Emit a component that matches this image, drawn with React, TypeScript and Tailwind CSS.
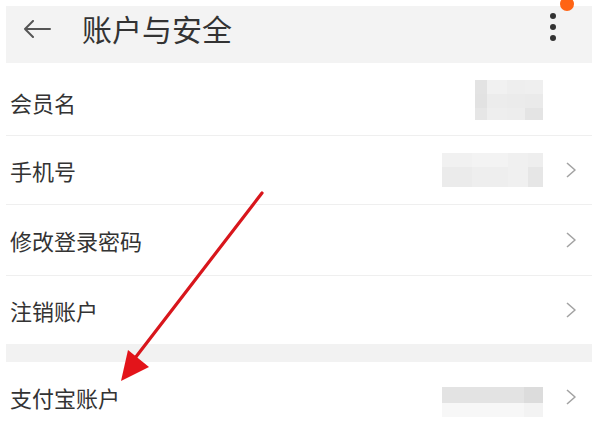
import React from 'react';

const cjk = { fontFamily: '"Noto Sans CJK SC", "Noto Sans", sans-serif' };

// Blurred placeholder (mosaic) on the right of a row
function Mosaic({ cells, cols, className }: { cells: string[]; cols: string; className: string }) {
  return (
    <div className={`grid ${cols} ${className}`}>
      {cells.map((c, i) => (
        <div key={i} style={{ backgroundColor: c }} />
      ))}
    </div>
  );
}

function Chevron() {
  return (
    <svg width="12" height="18" viewBox="0 0 12 18" className="shrink-0">
      <polyline points="2,2 10,9 2,16" fill="none" stroke="#a3a3a3" strokeWidth="1.6" strokeLinejoin="round" />
    </svg>
  );
}

interface RowProps {
  label: string;
  className: string;
  right?: React.ReactNode;
  arrow?: boolean;
}

function Row({ label, className, right, arrow = true }: RowProps) {
  return (
    <div className={`flex items-center pl-[4px] pr-[15px] ${className}`}>
      <span className="text-[22px] leading-none text-[#333333]" style={cjk}>
        {label}
      </span>
      <div className="ml-auto flex items-center gap-[22px]">
        {right}
        {arrow ? <Chevron /> : <div className="w-[12px]" />}
      </div>
    </div>
  );
}

export default function App() {
  return (
    <div className="relative h-[424px] w-[600px] overflow-hidden bg-white pl-[6px] pr-[8px] pt-[6px]">
      {/* Header */}
      <div className="flex h-[57px] items-center bg-[#f3f3f3] pb-[16px]">
        <svg width="28" height="18" viewBox="0 0 28 18" className="ml-[17px] mt-[5px]">
          <path d="M27 9H2M10 1L2 9l8 8" fill="none" stroke="#555555" strokeWidth="2" strokeLinecap="round" strokeLinejoin="round" />
        </svg>
        <h1 className="ml-[31px] mt-[3px] text-[30px] leading-none text-[#333333]" style={cjk}>
          账户与安全
        </h1>
        <div className="ml-auto mr-[36px] flex flex-col gap-[5px]">
          <span className="h-[6px] w-[6px] rounded-full bg-[#333333]" />
          <span className="h-[6px] w-[6px] rounded-full bg-[#333333]" />
          <span className="h-[6px] w-[6px] rounded-full bg-[#333333]" />
        </div>
      </div>

      {/* Rows */}
      <Row
        label="会员名"
        className="h-[73px] border-b border-[#efefef] pt-[6px]"
        arrow={false}
        right={
          <Mosaic
            cols="grid-cols-[12px_20px_18px_18px] grid-rows-[14px_14px_12px]"
            className="mt-[-4px] h-[40px] w-[68px]"
            cells={[
              '#e3e3e3', '#f1f1f1', '#eeeeee', '#efefef',
              '#e2e2e2', '#ececec', '#ebebeb', '#eaeaea',
              '#e6e6e6', '#eeeeee', '#ededed', '#e4e4e4',
            ]}
          />
        }
      />
      <Row
        label="手机号"
        className="h-[69px] border-b border-[#efefef]"
        right={
          <Mosaic
            cols="grid-cols-[30px_36px_20px_15px] grid-rows-[14px_20px]"
            className="h-[34px] w-[101px]"
            cells={[
              '#f1f1f1', '#f3f3f3', '#f0f0f0', '#eeeeee',
              '#ebebeb', '#eeeeee', '#f0f0f0', '#e6e6e6',
            ]}
          />
        }
      />
      <Row label="修改登录密码" className="h-[71px] border-b border-[#efefef]" />
      <Row label="注销账户" className="h-[68px]" />

      {/* Section gap */}
      <div className="h-[18px] bg-[#f2f2f2]" />

      <Row
        label="支付宝账户"
        className="h-[70px]"
        right={
          <Mosaic
            cols="grid-cols-[82px_19px] grid-rows-[16px_14px]"
            className="mt-[10px] h-[30px] w-[101px]"
            cells={['#e3e3e3', '#dcdcdc', '#f7f7f7', '#f3f3f3']}
          />
        }
      />

      {/* Notification badge */}
      <span className="absolute left-[560px] top-[-3px] h-[14px] w-[14px] rounded-full bg-[#ff6414]" />

      {/* Red annotation arrow */}
      <svg className="pointer-events-none absolute left-0 top-0" width="600" height="424" viewBox="0 0 600 424">
        <line x1="262" y1="193" x2="132" y2="362" stroke="#d8161c" strokeWidth="3.2" strokeLinecap="round" />
        <polygon points="121,381 149,367 128,350" fill="#e3141a" />
      </svg>
    </div>
  );
}
